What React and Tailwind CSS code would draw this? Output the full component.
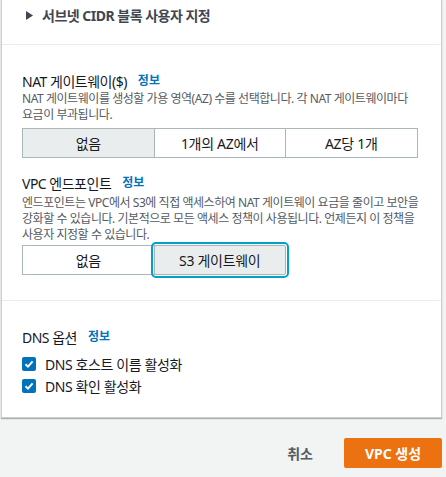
import React, { useState } from "react";

const font = { fontFamily: '"Noto Sans", "Noto Sans CJK KR", sans-serif' };

const InfoLink = () => (
  <a className="ml-[11px] text-[12px] font-bold text-[#0073bb] tracking-normal cursor-pointer">정보</a>
);

const Segmented = ({ options, value, onChange, focused }) => (
  <div className="flex">
    {options.map((opt, i) => {
      const selected = opt === value;
      return (
        <button
          key={opt}
          onClick={() => onChange(opt)}
          className={`w-[132.5px] h-[30px] border border-[#aab7b8] text-[14px] tracking-[-0.3px] text-[#16191f] ${
            i > 0 ? "-ml-px" : ""
          } ${selected ? "bg-[#eaeded]" : "bg-white"} ${
            selected && focused
              ? "relative rounded-[2px] outline-2 outline-offset-1 outline-[#00a1c9]"
              : ""
          }`}
        >
          {opt}
        </button>
      );
    })}
  </div>
);

const Check = ({ label, checked, onToggle }) => (
  <label className="flex items-center h-[22px] cursor-pointer" onClick={onToggle}>
    <span
      className={`w-[14px] h-[14px] rounded-[2px] flex items-center justify-center ${
        checked ? "bg-[#0073bb]" : "border border-[#aab7b8] bg-white"
      }`}
    >
      {checked && (
        <svg width="10" height="10" viewBox="0 0 10 10">
          <path d="M1.5 5.2 L4 7.6 L8.6 2.4" stroke="white" strokeWidth="2" fill="none" />
        </svg>
      )}
    </span>
    <span className="ml-[9px] text-[14px] tracking-[-0.4px] text-[#16191f]">{label}</span>
  </label>
);

export default function App() {
  const [nat, setNat] = useState("없음");
  const [endpoint, setEndpoint] = useState("S3 게이트웨이");
  const [dnsHost, setDnsHost] = useState(true);
  const [dnsResolve, setDnsResolve] = useState(true);

  return (
    <div className="w-[446px] h-[477px] bg-[#f2f3f3] overflow-hidden" style={font}>
      <div className="ml-[1px] w-[441px] bg-white border-x border-b border-[#c9d0d0] shadow-[0_1px_1px_0_rgba(0,28,36,0.3)]">
        <div className="h-[45px] border-b border-[#eaeded] pl-[24px] pt-[5px] flex items-start">
          <div className="flex items-center h-[20px]">
            <svg width="7" height="9" viewBox="0 0 7 9">
              <path d="M0 0 L7 4.5 L0 9 Z" fill="#414750" />
            </svg>
            <span className="ml-[9px] text-[14px] font-bold tracking-[-0.5px] text-[#414750]">
              서브넷 CIDR 블록 사용자 지정
            </span>
          </div>
        </div>

        <div className="px-[20px] pt-[26px] pb-[25px] border-b border-[#eaeded]">
          <div className="flex items-center h-[20px] text-[14px] tracking-[-0.5px] text-[#16191f]">
            NAT 게이트웨이($)
            <InfoLink />
          </div>
          <p className="text-[12px] leading-[16px] tracking-[-0.45px] text-[#545b64] whitespace-nowrap">
            NAT 게이트웨이를 생성할 가용 영역(AZ) 수를 선택합니다. 각 NAT 게이트웨이마다
            <br />
            요금이 부과됩니다.
          </p>
          <div className="mt-[5px]">
            <Segmented
              options={["없음", "1개의 AZ에서", "AZ당 1개"]}
              value={nat}
              onChange={setNat}
            />
          </div>

          <div className="mt-[15px] flex items-center h-[20px] text-[14px] tracking-[-0.5px] text-[#16191f]">
            VPC 엔드포인트
            <InfoLink />
          </div>
          <p className="mt-[2px] text-[12px] leading-[16px] tracking-[-0.45px] text-[#545b64] whitespace-nowrap">
            엔드포인트는 VPC에서 S3에 직접 액세스하여 NAT 게이트웨이 요금을 줄이고 보안을
            <br />
            강화할 수 있습니다. 기본적으로 모든 액세스 정책이 사용됩니다. 언제든지 이 정책을
            <br />
            사용자 지정할 수 있습니다.
          </p>
          <div className="mt-[2px]">
            <Segmented
              options={["없음", "S3 게이트웨이"]}
              value={endpoint}
              onChange={setEndpoint}
              focused
            />
          </div>
        </div>

        <div className="px-[20px] pt-[26px] pb-[20px]">
          <div className="flex items-center h-[20px] text-[14px] tracking-[-0.5px] text-[#16191f]">
            DNS 옵션
            <InfoLink />
          </div>
          <div className="mt-[6px]">
            <Check label="DNS 호스트 이름 활성화" checked={dnsHost} onToggle={() => setDnsHost(!dnsHost)} />
            <Check label="DNS 확인 활성화" checked={dnsResolve} onToggle={() => setDnsResolve(!dnsResolve)} />
          </div>
        </div>
      </div>

      <div className="flex justify-end items-center pr-[4px] mt-[20px]">
        <button className="mr-[31px] text-[14px] font-bold text-[#545b64]">취소</button>
        <button className="w-[98px] h-[30px] bg-[#ec7211] rounded-[2px] text-[14px] font-bold text-white">
          VPC 생성
        </button>
      </div>
    </div>
  );
}
